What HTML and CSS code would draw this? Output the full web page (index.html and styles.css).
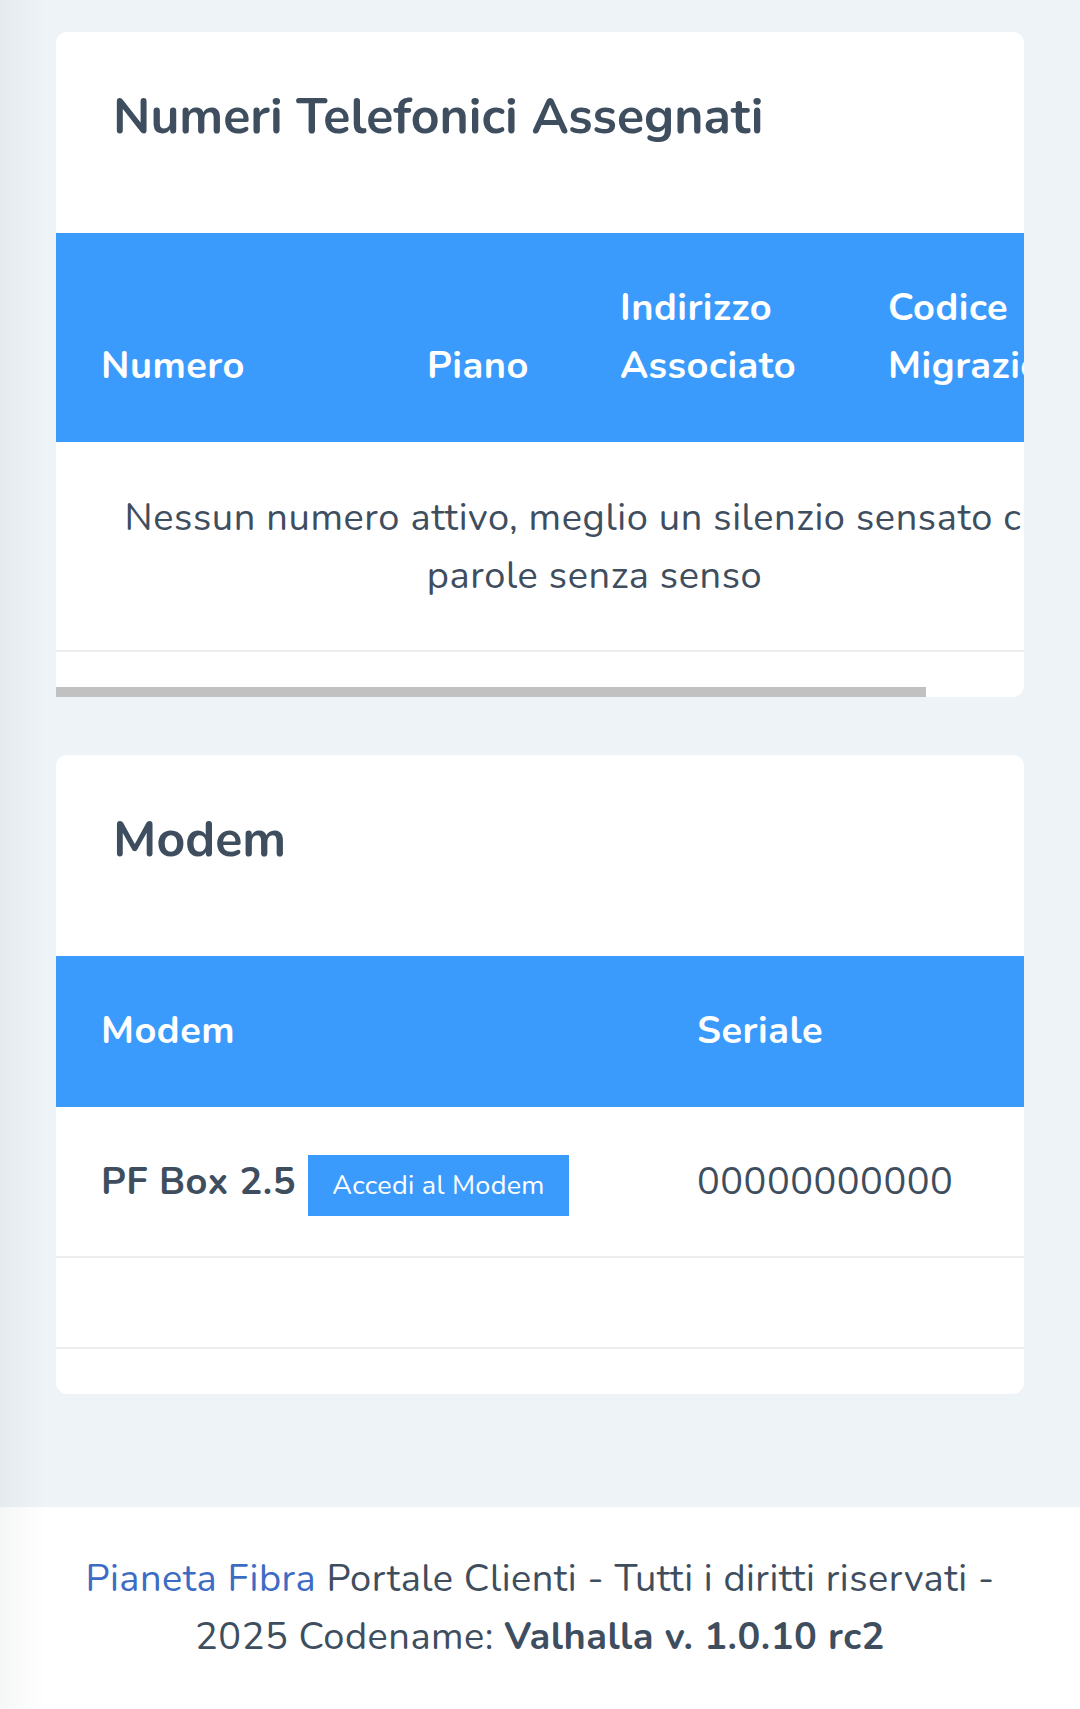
FILE: index.html
```html
<!DOCTYPE html>
<html lang="it">
<head>
<meta charset="utf-8">
<title>Pianeta Fibra - Portale Clienti</title>
<link rel="stylesheet" href="styles.css">
</head>
<body>
<div class="page">
  <main class="content">
    <section class="card">
      <div class="card-head">
        <h4 class="card-title">Numeri Telefonici Assegnati</h4>
      </div>
      <div class="table-wrap">
        <table class="data-table table-phones">
          <thead>
            <tr>
              <th class="c-num">Numero</th>
              <th class="c-plan">Piano</th>
              <th class="c-addr">Indirizzo Associato</th>
              <th class="c-code">Codice Migrazione</th>
            </tr>
          </thead>
          <tbody>
            <tr>
              <td colspan="4" class="empty-cell">Nessun numero attivo, meglio un silenzio sensato che parole senza senso</td>
            </tr>
          </tbody>
        </table>
        <div class="scroll-thumb"></div>
      </div>
    </section>

    <section class="card">
      <div class="card-head">
        <h4 class="card-title">Modem</h4>
      </div>
      <div class="table-wrap">
        <table class="data-table table-modem">
          <thead>
            <tr>
              <th class="c-modem">Modem</th>
              <th class="c-serial">Seriale</th>
            </tr>
          </thead>
          <tbody>
            <tr>
              <td class="modem-cell"><strong class="modem-name">PF Box 2.5</strong> <a class="btn-modem" href="#">Accedi al Modem</a></td>
              <td class="modem-cell">00000000000</td>
            </tr>
            <tr>
              <td></td>
              <td></td>
            </tr>
          </tbody>
        </table>
      </div>
    </section>
  </main>

  <footer class="footer">
    <a class="brand-link" href="#">Pianeta Fibra</a> Portale Clienti - Tutti i diritti riservati - 2025 Codename: <strong>Valhalla v. 1.0.10 rc2</strong>
  </footer>

  <div class="edge-shade"></div>
</div>
</body>
</html>
```

FILE: styles.css
```css
* {
  box-sizing: border-box;
}

html, body {
  margin: 0;
  padding: 0;
}

body {
  font-family: "Nunito", "Lato", "Open Sans", sans-serif;
  font-size: 38px;
  line-height: 58px;
  letter-spacing: 0.5px;
  color: #3e4e5e;
  background: #edf3f7;
}

.page {
  position: relative;
  min-height: 1709px;
  display: flex;
  flex-direction: column;
}

.content {
  flex: 1;
  padding: 32px 56px 113px;
  display: flex;
  flex-direction: column;
  gap: 58px;
}

.card {
  background: #ffffff;
  border-radius: 11px;
}

.card-head {
  padding: 55px 57px 86px;
}

.card-title {
  margin: 0;
  font-size: 50px;
  line-height: 60px;
  font-weight: 700;
  letter-spacing: 0;
  color: #3e4e5e;
}

.table-wrap {
  position: relative;
  overflow: hidden;
}

.data-table {
  border-collapse: collapse;
  border-spacing: 0;
  table-layout: fixed;
  margin-bottom: 45px;
}

.table-phones {
  width: 1077px;
}

.table-modem {
  width: 100%;
}

.data-table th {
  background: #3a9bfc;
  color: #ffffff;
  font-weight: 700;
  text-align: left;
  vertical-align: bottom;
  padding: 46px 45px 47px;
}

.data-table td {
  padding: 45px 45px 44px;
  border-bottom: 2px solid #ebedef;
  vertical-align: top;
  height: 91px;
}

.c-num { width: 326px; }
.c-plan { width: 193px; }
.c-addr { width: 268px; }
.c-code { width: 290px; }

.c-modem { width: 596px; }
.c-serial { width: 372px; }

.data-table .empty-cell {
  text-align: center;
  letter-spacing: 0.6px;
  padding-top: 47px;
  padding-bottom: 45px;
}

.data-table .modem-cell {
  padding-top: 46px;
  padding-bottom: 40px;
}

.modem-name {
  font-weight: 700;
}

.btn-modem {
  display: inline-block;
  margin-left: 2px;
  padding: 8px 24px;
  font-size: 27px;
  line-height: 45px;
  letter-spacing: 0.3px;
  color: #ffffff;
  background: #3a9bfc;
  text-decoration: none;
  vertical-align: baseline;
}

.scroll-thumb {
  position: absolute;
  left: 0;
  bottom: 0;
  width: 870px;
  height: 10px;
  background: #c1c1c1;
}

.footer {
  background: #ffffff;
  text-align: center;
  padding: 43px 50px 44px;
  color: #3e4e5e;
}

.brand-link {
  color: #3d6cc4;
  text-decoration: none;
}

.footer strong {
  font-weight: 700;
}

.edge-shade {
  position: absolute;
  left: 0;
  top: 0;
  bottom: 0;
  width: 46px;
  background: linear-gradient(to right, rgba(40, 55, 70, 0.045), rgba(40, 55, 70, 0));
  pointer-events: none;
}
```
